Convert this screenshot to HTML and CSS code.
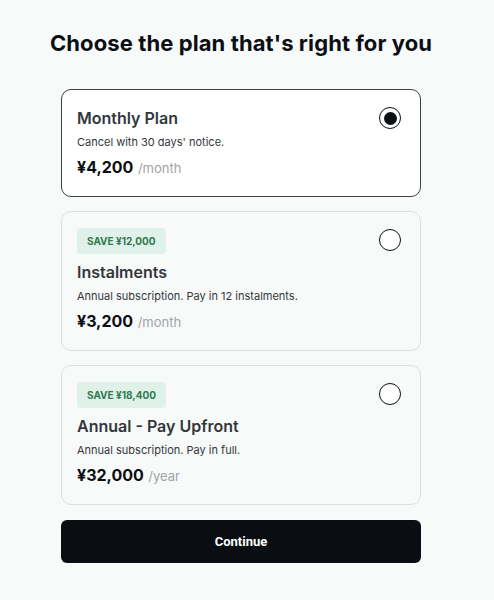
FILE: index.html
```html
<!DOCTYPE html>
<html>
<head>
<meta charset="utf-8">
<link rel="stylesheet" href="styles.css">
</head>
<body>
<main class="page">
  <h1 class="title">Choose the plan that's right for you</h1>
  <div class="plans">
    <div class="card selected">
      <div class="info">
        <div class="name">Monthly Plan</div>
        <div class="desc">Cancel with 30 days' notice.</div>
        <div class="price"><span class="amount">¥4,200</span> <span class="per">/month</span></div>
      </div>
      <span class="radio on"></span>
    </div>
    <div class="card">
      <div class="info">
        <span class="badge">SAVE ¥12,000</span>
        <div class="name">Instalments</div>
        <div class="desc">Annual subscription. Pay in 12 instalments.</div>
        <div class="price"><span class="amount">¥3,200</span> <span class="per">/month</span></div>
      </div>
      <span class="radio"></span>
    </div>
    <div class="card">
      <div class="info">
        <span class="badge">SAVE ¥18,400</span>
        <div class="name">Annual - Pay Upfront</div>
        <div class="desc">Annual subscription. Pay in full.</div>
        <div class="price"><span class="amount">¥32,000</span> <span class="per">/year</span></div>
      </div>
      <span class="radio"></span>
    </div>
  </div>
  <button class="continue">Continue</button>
</main>
</body>
</html>
```
FILE: styles.css
```css
html, body {
  margin: 0;
  padding: 0;
  background: #f8fafa;
}
body {
  font-family: Inter, Roboto, "Liberation Sans", sans-serif;
  color: #0b0f14;
  padding-right: 12px;
}
.page {
  width: 360px;
  margin: 0 auto;
  padding-top: 28px;
  display: flex;
  flex-direction: column;
}
.title {
  margin: 0 -20px 31px;
  font-size: 22px;
  font-weight: 700;
  line-height: 30px;
  text-align: center;
  white-space: nowrap;
  letter-spacing: 0.1px;
}
.plans {
  display: flex;
  flex-direction: column;
  gap: 14px;
}
.card {
  box-sizing: border-box;
  display: flex;
  justify-content: space-between;
  align-items: flex-start;
  padding: 16px 19px 16px 15px;
  border: 1px solid #dcdfe0;
  border-radius: 10px;
  background: #f8f9f9;
}
.card.selected {
  background: #ffffff;
  border-color: #3d4247;
}
.info {
  display: flex;
  flex-direction: column;
  align-items: flex-start;
}
.badge {
  height: 26px;
  line-height: 26px;
  padding: 0 10px;
  border-radius: 4px;
  background: #dff1e8;
  color: #2f7a52;
  font-size: 10px;
  font-weight: 700;
  margin-bottom: 6px;
}
.name {
  font-size: 16px;
  font-weight: 600;
  line-height: 24px;
  color: #33373c;
}
.desc {
  margin-top: 4px;
  font-size: 11px;
  line-height: 16px;
  color: #33373c;
}
.price {
  margin-top: 5px;
  line-height: 24px;
}
.amount {
  font-size: 16px;
  font-weight: 700;
  color: #0b0f14;
}
.per {
  font-size: 13px;
  color: #a0a4a8;
}
.radio {
  flex: none;
  box-sizing: border-box;
  width: 22px;
  height: 22px;
  margin-top: 1px;
  border: 1.5px solid #0b0f14;
  border-radius: 50%;
  background: #fff;
  display: flex;
  align-items: center;
  justify-content: center;
}
.radio.on::after {
  content: "";
  width: 13px;
  height: 13px;
  border-radius: 50%;
  background: #0b0f14;
}
.continue {
  margin-top: 15px;
  height: 43px;
  border: none;
  border-radius: 6px;
  background: #0a0e12;
  color: #fff;
  font-family: Roboto, "Liberation Sans", sans-serif;
  font-size: 13px;
  font-weight: 700;
}
```
